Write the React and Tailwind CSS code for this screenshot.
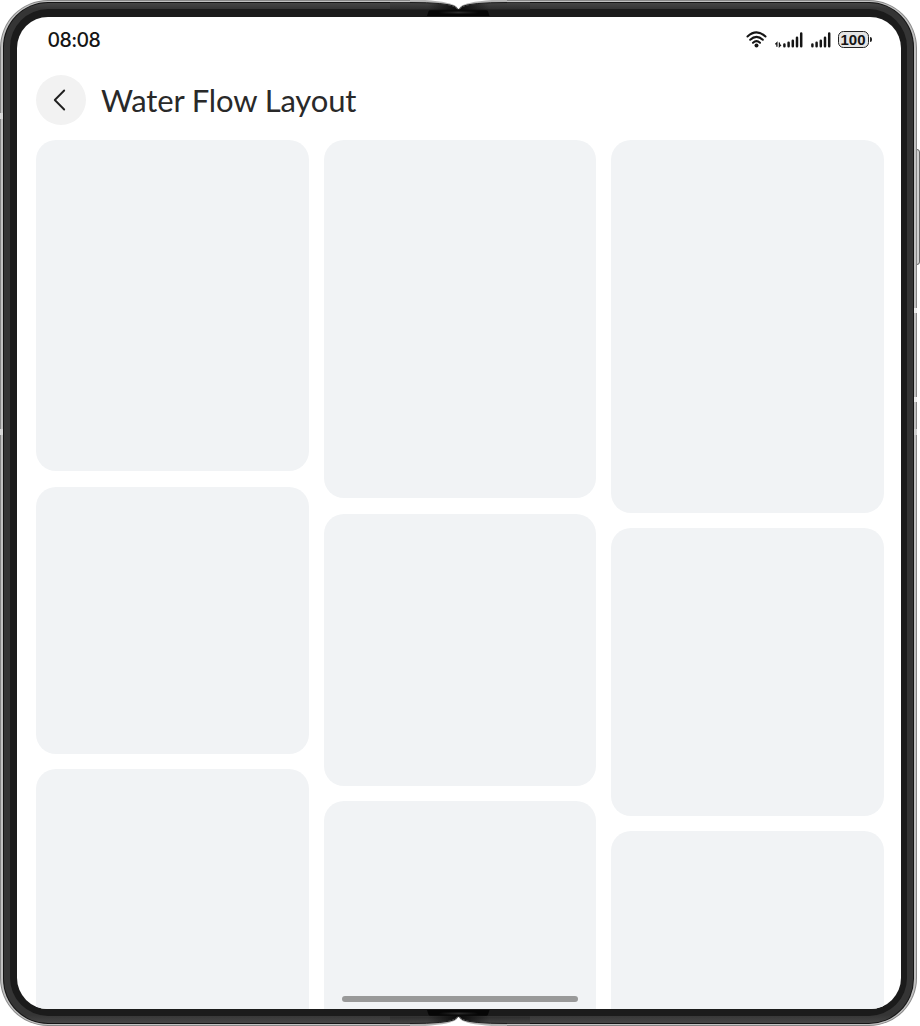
const columns = [
  { gap: 'gap-[15.500px]', tiles: ['h-[331px]', 'h-[267px]', 'h-[300px]'] },
  { gap: 'gap-[15.500px]', tiles: ['h-[358px]', 'h-[272px]', 'h-[300px]'] },
  { gap: 'gap-[15px]', tiles: ['h-[373px]', 'h-[288px]', 'h-[300px]'] },
];

function Wifi() {
  return (
    <svg className="h-[17px] w-[21px]" viewBox="0 0 21 17" fill="none" stroke="#151515" strokeWidth="2.1" strokeLinecap="round">
      <path d="M1.5 5.500Q10.5-2.700 19.500 5.500M4.200 8.700Q10.500 2.900 16.800 8.700M7 11.700Q10.500 8.500 14 11.700" />
      <circle cx="10.5" cy="14.5" r="2" fill="#151515" stroke="none" />
    </svg>
  );
}

function Bars() {
  return (
    <svg className="h-[16px] w-[20px]" viewBox="0 0 20 16" fill="none" stroke="#151515" strokeWidth="2.5" strokeLinecap="round">
      <path d="M1.4 14.2v-1.8M5.6 14.2v-3.4M9.8 14.2V8.8M14 14.2V5.8M18.2 14.2V1.6" />
    </svg>
  );
}

function DataArrows() {
  return (
    <svg className="h-[16px] w-[8px]" viewBox="0 0 8 16" fill="none" stroke="#151515" strokeWidth="1.3">
      <path d="M.3 12.400l1.600-1.600v4M6 12.800l-1.600 1.600v-4" />
    </svg>
  );
}

function Hinge({ className }) {
  return (
    <svg className={className} viewBox="0 0 140 17" fill="none">
      <defs>
        <linearGradient id="edge" gradientUnits="userSpaceOnUse" x1="0" x2="0" y1="2" y2="10">
          <stop offset="0" stopColor="#464646" />
          <stop offset="1" stopColor="#2b2b2b" />
        </linearGradient>
        <linearGradient id="shade" x1="0" x2="1">
          <stop offset="0" stopColor="#060606" stopOpacity="0" />
          <stop offset=".5" stopColor="#060606" stopOpacity=".9" />
          <stop offset="1" stopColor="#060606" stopOpacity="0" />
        </linearGradient>
        <linearGradient id="slot" x1="0" x2="1">
          <stop offset="0" stopColor="#050505" />
          <stop offset=".5" stopColor="#2c2c2c" />
          <stop offset="1" stopColor="#050505" />
        </linearGradient>
      </defs>
      <path d="M20 0H117V9H20Z" fill="#b4b4b4" />
      <path d="M0 2.500H20Q55 2.500 65.500 7.500L68.500 11L71.500 7.500Q82 2.500 117 2.500H140V9.500H0Z" fill="url(#edge)" />
      <path d="M38 3Q56 3 65.500 7.500L68.500 11L71.500 7.500Q81 3 99 3V10H38Z" fill="url(#shade)" />
      <path d="M37 16l1.500-4.500q.5-1.200 2-1.200H96q1.500 0 2 1.200L99.500 16Z" fill="#060606" />
      <path d="M48 11.500H89Q88 13.500 84 13.500H53Q49 13.500 48 11.500Z" fill="url(#slot)" />
      <path d="M35 0H102Q75 2 70.500 6.500L68.500 9L66.500 6.500Q62 2 35 0Z" fill="#fff" />
      <path d="M20 2.500Q56 2.500 65 6.500L68 9.500M117 2.500Q81 2.500 72 6.500L69 9.500" stroke="#1c1c1c" />
    </svg>
  );
}

export default function App() {
  return (
    <div className="relative h-[1026px] w-[920px] overflow-hidden bg-white">
      <div className="absolute left-[914px] top-[149px] h-[116px] w-[6px] rounded-r-[3px] border border-[#666] bg-[#d0d0d0]" />
      <div className="relative h-[1025.500px] w-[917px] rounded-[48px] bg-[#888] p-[1px]">
        <div className="h-full rounded-[47px] bg-[#c2c2c2] px-[2px] py-[1px]">
          <div className="h-full rounded-[45px] bg-[#151515] p-[1px]">
            <div className="h-full rounded-[44px] bg-[linear-gradient(#464646,#353535_6px,#353535_1012px,#464646)] px-[6px] pb-[6.500px] pt-[6px]">
              <div className="h-full rounded-[38px] bg-[#1b1b1b] px-[6.500px] pb-[7px] pt-[7.500px]">
                <main className="flex h-full flex-col overflow-hidden rounded-[31px] bg-white">
                  <header className="flex h-[46px] shrink-0 items-center justify-between pl-[31px] pr-[29px]">
                    <span className="pt-[2px] font-[Inter,sans-serif] text-[19.500px] font-medium leading-none tracking-[-0.6px] text-[#151515]">08:08</span>
                    <div className="flex items-center">
                      <Wifi />
                      <div className="ml-[7.500px] flex"><DataArrows /><Bars /></div>
                      <div className="ml-[8px] flex"><Bars /></div>
                      <div className="ml-[7px] flex items-center gap-[1px]">
                        <div className="flex h-[17px] w-[31px] items-center justify-center rounded-[5.500px] border-[1.500px] border-[#222] bg-[#e5e5e5] font-['Liberation_Sans',sans-serif] text-[15px] font-bold leading-none text-[#151515]">100</div>
                        <span className="h-[5px] w-[2px] rounded-r-sm bg-[#222]" />
                      </div>
                    </div>
                  </header>
                  <div className="flex h-[77.500px] shrink-0 items-center gap-[15px] pb-[2.500px] pl-[19.500px]">
                    <button aria-label="Back" className="flex size-[50px] items-center justify-center rounded-full bg-[#f2f2f2]">
                      <svg className="size-[24px]" viewBox="0 0 24 24" fill="none" stroke="#202020" strokeWidth="1.9" strokeLinecap="round" strokeLinejoin="round">
                        <path d="M15.200 2.500L5.800 12L15.200 21.500" />
                      </svg>
                    </button>
                    <h1 className="whitespace-nowrap font-[Lato,sans-serif] text-[31px] font-normal leading-none tracking-[-0.13px] text-[#292929]">Water Flow Layout</h1>
                  </div>
                  <div className="grid min-h-0 flex-1 grid-cols-3 gap-[15px] overflow-hidden pl-[19.500px] pr-[16.500px]">
                    {columns.map((column, i) => (
                      <div key={i} className={`flex flex-col ${column.gap}`}>
                        {column.tiles.map((height, j) => (
                          <div key={j} className={`${height} shrink-0 rounded-[20px] bg-[#f1f3f5]`} />
                        ))}
                      </div>
                    ))}
                  </div>
                </main>
              </div>
            </div>
          </div>
        </div>
        <Hinge className="absolute left-[390px] top-0 h-[17px] w-[140px]" />
        <Hinge className="absolute bottom-0 left-[390px] h-[17px] w-[140px] -scale-y-100" />
      </div>
      <div className="absolute left-[342px] top-[996px] h-[6px] w-[236px] rounded-full bg-[#999]" />
      <div className="absolute left-0 top-[113px] h-[6px] w-[3px] bg-[#d8d8d8]" />
      <div className="absolute left-0 top-[429px] h-[6px] w-[3px] bg-[#d8d8d8]" />
      <div className="absolute left-[914px] top-[308px] h-[5px] w-[3px] bg-[#eee]" />
      <div className="absolute left-[914px] top-[397px] h-[5px] w-[3px] bg-[#eee]" />
      <div className="absolute left-[914px] top-[429px] h-[6px] w-[3px] bg-[#d0d0d0]" />
    </div>
  );
}
